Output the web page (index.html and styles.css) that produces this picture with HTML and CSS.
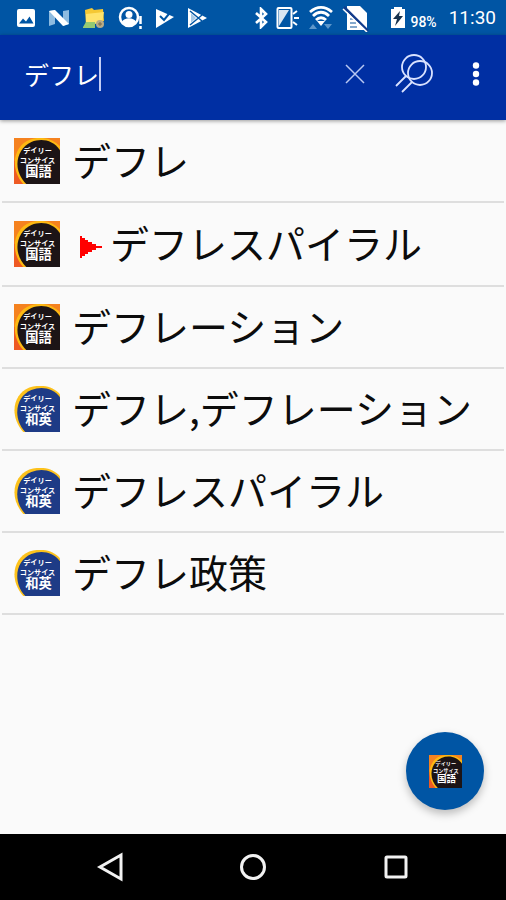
FILE: index.html
```html
<!DOCTYPE html>
<html lang="ja">
<head>
<meta charset="utf-8">
<meta name="viewport" content="width=device-width, initial-scale=1">
<title>デフレ</title>
<link rel="stylesheet" href="styles.css">
</head>
<body>
<svg class="defs" aria-hidden="true">
  <symbol id="kokugo" viewBox="0 0 45 45">
    <rect width="45" height="45" fill="#f5821f"/>
    <path d="M0 22V45H22z" fill="#ee5a24"/>
    <path d="M9 45C-5 29 0 7 16 1.500C26-2 37 0 45 8V45z" fill="#fdb913"/>
    <path d="M12 45C-2 31 2 11 17 4C27 0 38 2 45 12V45z" fill="#1c1416"/>
  </symbol>
  <symbol id="waei" viewBox="0 0 45 45">
    <path d="M9 45C-5 29 -1 8 15 1.500C26-2 38 0 45 8V45z" fill="#fdc21c"/>
    <path d="M11 45C-2 31 2 10 17 4C27 0 38 2 45 11V45z" fill="#1e3b86"/>
  </symbol>
</svg>
<div class="screen">
  <div class="status">
    <div class="status-group notices">
      <svg width="20" height="20" viewBox="0 0 20 20"><rect x="1" y="1" width="18" height="18" rx="2" fill="#fff"/><path d="M3 15.500l4-5 3 3 3.500-5 4 7z" fill="#0055a4"/></svg>
      <svg width="22" height="20" viewBox="0 0 22 20"><path d="M1 3l6-1v14l-6 2zM15 3l6-1v14l-6 2z" fill="#8dbbe0"/><path d="M1 3l6-1 14 14-6 2z" fill="#fff"/></svg>
      <svg width="24" height="24" viewBox="0 0 24 24"><path d="M3 4l7-2 2 2 9-1 1 12-18 4z" fill="#f5c834"/><path d="M4 8l18-2-2 11-16 2z" fill="#ffe36b"/><path d="M1 21l3-5h9v6H1z" fill="#94c973"/><circle cx="18" cy="18" r="4" fill="#b7ab87"/><path d="M16 18h4M18 16v4" stroke="#796b4b"/></svg>
      <svg width="25" height="24" viewBox="0 0 25 24"><circle cx="11" cy="11" r="9" fill="none" stroke="#fff" stroke-width="2.500"/><circle cx="11" cy="8.500" r="3.500" fill="#fff"/><path d="M4 16c2-5 12-5 14 0-3 5-11 5-14 0z" fill="#fff"/><path d="M22.500 10v8M22.500 20v3" stroke="#fff" stroke-width="2.500"/></svg>
      <svg width="20" height="20" viewBox="0 0 20 20"><path d="M1 1l18 8L1 20z" fill="#fff"/><path d="M5 8l4 4 9-11" fill="none" stroke="#0055a4" stroke-width="2"/></svg>
      <svg width="21" height="20" viewBox="0 0 21 20"><path d="M1 0l19 10L1 20z" fill="#fff"/><path d="M3 3l12 10M3 17L15 7" stroke="#0055a4" stroke-width="1.500"/><path d="M4 5l5 5-5 5z" fill="#a9cae7"/></svg>
    </div>
    <div class="status-group system">
      <svg width="14" height="22" viewBox="0 0 14 22"><path d="M2 6l10 9-5 5V2l5 5-10 9" fill="none" stroke="#fff" stroke-width="2.600"/></svg>
      <svg width="24" height="24" viewBox="0 0 24 24"><rect x="1.500" y="2" width="14" height="20" rx="1" fill="none" stroke="#fff" stroke-width="2"/><path d="M3 4h10L3 20z" fill="#fff" opacity=".85"/><path d="M17 8l4-3M18 12h5M17 16l4 3" stroke="#fff" stroke-width="2"/></svg>
      <svg width="26" height="26" viewBox="0 0 26 26"><path d="M2 7c7-6 15-6 22 0M5 11c5-5 11-5 16 0M8 15c3-3 7-3 10 0" fill="none" stroke="#fff" stroke-width="2.800"/><path d="M9 16h8l-4 5z" fill="#fff"/><path d="M1 24l4-5 4 5zM16 19h8l-4 5z" fill="#5c96ca"/></svg>
      <svg width="28" height="28" viewBox="0 0 28 28"><path d="M5 2h13l7 7v17H5z" fill="#fff"/><path d="M8 15h4M8 19h6M8 23h7" stroke="#5c8dbd" stroke-width="1.500"/><path d="M2 3l24 24" stroke="#123c8c" stroke-width="2.500"/><path d="M1 5l24 23" stroke="#fff" stroke-width="1.500"/></svg>
      <svg class="battery" width="16" height="24" viewBox="0 0 16 24"><path d="M4 3V1h8v2h3v19H1V3z" fill="#fff"/><path d="M10 5l-7 8h4l-2 7 8-10H9z" fill="#17324d"/></svg>
      <span class="percent">98%</span>
      <span class="clock">11:30</span>
    </div>
  </div>
  <header class="toolbar">
    <div class="search">
      <input class="query" type="text" value="デフレ" aria-label="検索"><span class="caret"></span>
    </div>
    <button class="tool" type="button" aria-label="消去"><svg width="20" height="20" viewBox="0 0 20 20"><path d="M1 1l18 18M19 1L1 19" stroke="#b9c8f2" stroke-width="1.500"/></svg></button>
    <button class="tool" type="button" aria-label="全辞書検索"><svg width="40" height="40" viewBox="0 0 40 40" fill="none" stroke="#d9e2ff" stroke-width="1.800"><circle cx="20" cy="13" r="12"/><circle cx="26" cy="19" r="12"/><path d="M12 22L2 32M18 28L8 38"/></svg></button>
    <button class="tool" type="button" aria-label="メニュー"><svg width="8" height="24" viewBox="0 0 8 24" fill="#fff"><circle cx="4" cy="3.500" r="3.200"/><circle cx="4" cy="12" r="3.200"/><circle cx="4" cy="20.500" r="3.200"/></svg></button>
  </header>
  <main class="results">
    <ul class="list">
      <li><a class="row" href="#"><svg class="cover" viewBox="0 0 45 45"><use href="#kokugo"/><text class="small" x="23" y="15">デイリー</text><text class="small" x="23" y="24">コンサイス</text><text class="large" x="24" y="37">国語</text></svg><span class="word">デフレ</span></a></li>
      <li><a class="row row-marked" href="#"><svg class="cover" viewBox="0 0 45 45"><use href="#kokugo"/><text class="small" x="23" y="15">デイリー</text><text class="small" x="23" y="24">コンサイス</text><text class="large" x="24" y="37">国語</text></svg><svg class="marker" viewBox="0 0 22 22"><path d="M0 0h2v2h3v2h3v2h4v2h4v2h6v2h-6v2h-4v2H8v2H5v2H2v2H0z" fill="#f00"/></svg><span class="word">デフレスパイラル</span></a></li>
      <li><a class="row" href="#"><svg class="cover" viewBox="0 0 45 45"><use href="#kokugo"/><text class="small" x="23" y="15">デイリー</text><text class="small" x="23" y="24">コンサイス</text><text class="large" x="24" y="37">国語</text></svg><span class="word">デフレーション</span></a></li>
      <li><a class="row" href="#"><svg class="cover" viewBox="0 0 45 45"><use href="#waei"/><text class="small" x="23" y="15">デイリー</text><text class="small" x="23" y="24">コンサイス</text><text class="large" x="24" y="37">和英</text></svg><span class="word">デフレ,デフレーション</span></a></li>
      <li><a class="row" href="#"><svg class="cover" viewBox="0 0 45 45"><use href="#waei"/><text class="small" x="23" y="15">デイリー</text><text class="small" x="23" y="24">コンサイス</text><text class="large" x="24" y="37">和英</text></svg><span class="word">デフレスパイラル</span></a></li>
      <li><a class="row" href="#"><svg class="cover" viewBox="0 0 45 45"><use href="#waei"/><text class="small" x="23" y="15">デイリー</text><text class="small" x="23" y="24">コンサイス</text><text class="large" x="24" y="37">和英</text></svg><span class="word">デフレ政策</span></a></li>
    </ul>
    <button class="fab" type="button" aria-label="辞書切替"><svg class="cover cover-mini" viewBox="0 0 45 45"><use href="#kokugo"/><text class="small" x="23" y="15">デイリー</text><text class="small" x="23" y="24">コンサイス</text><text class="large" x="24" y="37">国語</text></svg></button>
  </main>
  <nav class="navbar">
    <button type="button" aria-label="戻る"><svg width="30" height="30" viewBox="0 0 30 30"><path d="M26 3v24L5 15z"/></svg></button>
    <button type="button" aria-label="ホーム"><svg width="30" height="30" viewBox="0 0 30 30"><circle cx="15" cy="15" r="11.500"/></svg></button>
    <button type="button" aria-label="履歴"><svg width="30" height="30" viewBox="0 0 30 30"><rect x="5" y="5" width="20" height="20" rx="1"/></svg></button>
  </nav>
</div>
</body>
</html>
```
FILE: styles.css
```css
* {
  box-sizing: border-box;
}

body {
  margin: 0;
  font-family: "Noto Sans CJK JP", sans-serif;
  background: #fafafa;
}

button {
  display: flex;
  align-items: center;
  justify-content: center;
  padding: 0;
  border: 0;
  background: none;
}

svg {
  flex: none;
}

.defs {
  display: none;
}

.screen {
  display: flex;
  flex-direction: column;
  min-height: 100vh;
}

.status {
  display: flex;
  align-items: center;
  justify-content: space-between;
  height: 35px;
  padding: 0 10px 0 16px;
  background: #0055a4;
  color: #fff;
  font-family: Roboto, sans-serif;
}

.status-group {
  display: flex;
  align-items: center;
}

.notices {
  gap: 12px;
}

.system {
  gap: 8px;
}

.battery {
  margin-left: 12px;
}

.percent {
  margin: 8px 4px 0 -4px;
  font-size: 14px;
  font-weight: 500;
}

.clock {
  font-size: 19px;
}

.toolbar {
  position: relative;
  z-index: 1;
  display: flex;
  align-items: center;
  gap: 29px;
  height: 85px;
  padding: 0 26px 8px 24px;
  background: #002fa3;
  box-shadow: 0 1px 4px rgba(0, 0, 0, 0.4);
}

.search {
  display: flex;
  flex: 1;
  align-items: center;
  min-width: 0;
}

.query {
  field-sizing: content;
  padding: 0;
  border: 0;
  outline: 0;
  background: none;
  color: #fff;
  font: 25px/36px "Noto Sans CJK JP", sans-serif;
}

.caret {
  width: 2px;
  height: 34px;
  background: #c3cdf5;
}

.tool:last-child {
  margin-left: 9px;
}

.results {
  position: relative;
  flex: 1;
  background: #fafafa;
}

.list {
  margin: 0;
  padding: 1px 2px 0;
  list-style: none;
}

.row {
  display: flex;
  align-items: center;
  gap: 12px;
  min-height: 82px;
  padding: 0 12px;
  border-bottom: 2px solid #dedede;
  color: #0c0c0c;
  font-size: 39px;
  line-height: 56px;
  text-decoration: none;
  white-space: nowrap;
}

.row-marked {
  min-height: 84px;
}

.word {
  padding-bottom: 4px;
}

.cover {
  width: 46px;
  height: 46px;
  fill: #fff;
  font-family: "Noto Sans CJK JP", sans-serif;
  font-weight: 700;
  text-anchor: middle;
}

.cover-mini {
  width: 33px;
  height: 33px;
}

.small {
  font-size: 7px;
}

.large {
  font-size: 13px;
}

.marker {
  width: 22px;
  height: 22px;
  margin: 6px -4px 0 8px;
}

.fab {
  position: absolute;
  right: 22px;
  bottom: 24px;
  width: 78px;
  height: 78px;
  border-radius: 50%;
  background: #0055a4;
  box-shadow: 0 4px 8px rgba(0, 0, 0, 0.25);
}

.navbar {
  display: flex;
  align-items: center;
  justify-content: center;
  gap: 113px;
  height: 66px;
  background: #000;
}

.navbar svg {
  fill: none;
  stroke: #f2f2f2;
  stroke-width: 3;
}
```
